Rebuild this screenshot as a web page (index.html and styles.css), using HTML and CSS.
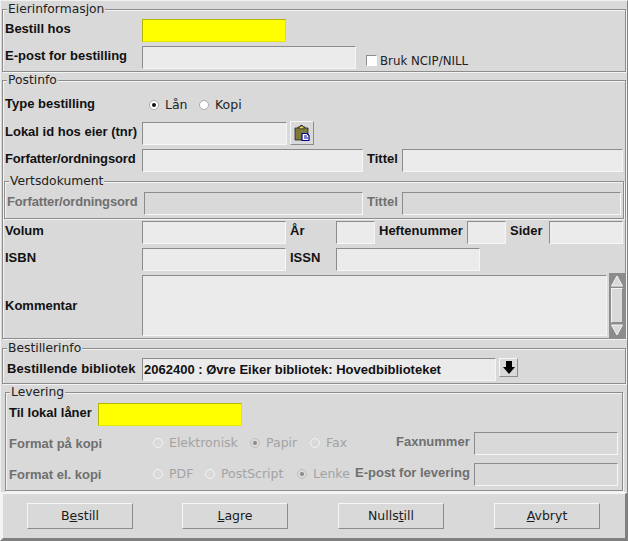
FILE: index.html
```html
<!DOCTYPE html>
<html lang="no">
<head>
<meta charset="utf-8">
<title>Bestilling</title>
<link rel="stylesheet" href="styles.css">
</head>
<body>
<div class="window">
  <form class="form">
    <fieldset class="group owner">
      <legend>Eierinformasjon</legend>
      <div class="row r1"><label class="lab l137">Bestill hos</label><input class="field req w144"></div>
      <div class="row r2"><label class="lab l137">E-post for bestilling</label><input class="field w214"><label class="check"><span class="box"></span>Bruk NCIP/NILL</label></div>
    </fieldset>
    <fieldset class="group post">
      <legend>Postinfo</legend>
      <div class="row r3"><label class="lab l137">Type bestilling</label>
        <span class="radios"><span class="radio on first"></span><span class="rtext t1">Lån</span><span class="radio"></span><span class="rtext">Kopi</span></span></div>
      <div class="row r4"><label class="lab l137">Lokal id hos eier (tnr)</label><input class="field w145 end"><button type="button" class="iconbtn paste" aria-label="Lim inn">
        <svg width="16" height="16" viewBox="0 0 16 16"><path d="M1 3h3V2h1.500l1-1.500h2l1 1.500H11v1h3v8.500H10V15H1z" fill="#7d7a3c" stroke="#222" stroke-width=".8"/><path d="M5 2.800l1.800-1.800h1.500l1.800 1.800v1H5z" fill="#e6d96a" stroke="#222" stroke-width=".7"/><path d="M8 8.500h5l2 2v5H8z" fill="#fff" stroke="#008" stroke-width="1.200"/><path d="M10 11h3M10 13h4" stroke="#008"/></svg></button></div>
      <div class="row r5"><label class="lab l137 tight">Forfatter/ordningsord</label><input class="field w221"><label class="lab tittel">Tittel</label><input class="field w221"></div>
      <fieldset class="group host">
        <legend>Vertsdokument</legend>
        <div class="row r6"><label class="lab dim l137 tight">Forfatter/ordningsord</label><input class="field off w219"><label class="lab dim tittel">Tittel</label><input class="field off w219"></div>
      </fieldset>
      <div class="row r7a"><label class="lab l137">Volum</label><input class="field w144"><label class="lab aar">År</label><input class="field w39"><label class="lab hefte">Heftenummer</label><input class="field w39"><label class="lab sider">Sider</label><input class="field w74"></div>
      <div class="row r7"><label class="lab l137">ISBN</label><input class="field w144"><label class="lab aar">ISSN</label><input class="field w144"></div>
      <div class="row r8"><label class="lab l137 mid">Kommentar</label><textarea class="field area"></textarea>
        <div class="scroll">
          <svg class="sarrow" width="12" height="12" viewBox="0 0 12 12"><path d="M6 1L11.500 11H.5z" fill="#d9d9d9" stroke="#f4f4f4"/></svg>
          <div class="thumb"></div>
          <svg class="sarrow" width="12" height="12" viewBox="0 0 12 12"><path d="M6 11L11.500 1H.5z" fill="#d9d9d9" stroke="#f4f4f4"/></svg>
        </div>
      </div>
    </fieldset>
    <fieldset class="group orderer">
      <legend>Bestillerinfo</legend>
      <div class="row r9"><label class="lab libl">Bestillende bibliotek</label><input class="field value" value="2062400 : Øvre Eiker bibliotek: Hovedbiblioteket"><button type="button" class="iconbtn drop" aria-label="Velg">
        <svg width="12" height="13" viewBox="0 0 12 13"><path d="M3 0h6v6h3L6 13 0 6h3z" fill="#000"/></svg></button></div>
    </fieldset>
    <fieldset class="group delivery">
      <legend>Levering</legend>
      <div class="row r10"><label class="lab til">Til lokal låner</label><input class="field req w144"></div>
      <div class="row r11"><label class="lab dim fmt">Format på kopi</label>
        <span class="radios dimr"><span class="radio f1"></span><span class="rtext e1">Elektronisk</span><span class="radio on"></span><span class="rtext e2">Papir</span><span class="radio"></span><span class="rtext e3">Fax</span></span>
        <label class="lab dim fax">Faxnummer</label><input class="field off w144"></div>
      <div class="row r12"><label class="lab dim fmt">Format el. kopi</label>
        <span class="radios dimr"><span class="radio f1"></span><span class="rtext p1">PDF</span><span class="radio"></span><span class="rtext p2">PostScript</span><span class="radio on"></span><span class="rtext p3">Lenke</span></span>
        <label class="lab dim epost">E-post for levering</label><input class="field off w144"></div>
    </fieldset>
  </form>
  <div class="actions">
    <button type="button" class="btn">B<u>e</u>still</button>
    <button type="button" class="btn second"><u>L</u>agre</button>
    <button type="button" class="btn">Nulls<u>t</u>ill</button>
    <button type="button" class="btn"><u>A</u>vbryt</button>
  </div>
</div>
</body>
</html>
```
FILE: styles.css
```css
* { box-sizing: border-box; }
html, body { margin: 0; padding: 0; }
body { width: 628px; height: 541px; background: #d9d9d9; overflow: hidden; font-family: "DejaVu Sans", sans-serif; font-size: 12px; color: #1c1c1c; }
.window { width: 628px; height: 541px; display: flex; flex-direction: column; }
.form { flex: none; height: 492px; display: flex; flex-direction: column; padding: 1px 1px 0 1px; border-top: 1px solid #f0f0f0; border-left: 1px solid #f0f0f0; border-right: 1px solid #808080; }

.group { margin: 0; padding: 0; min-width: 0; border: 1px solid #8c8c8c; box-shadow: inset 1px 1px 0 #f4f4f4, 1px 1px 0 #f4f4f4; display: flex; flex-direction: column; }
legend { margin-left: 2px; padding: 1px 1px 0; height: 14px; line-height: 13px; font-size: 12.3px; color: #222; background: #d9d9d9; position: relative; }

.owner { height: 70px; padding: 3px 0 0 2px; }
.post { height: 266px; margin-top: 1px; padding: 0 0 0 2px; }
.host { height: 45px; margin: 2px 0 0 -1px; width: 620px; padding: 4px 0 0 2px; }
.orderer { height: 43px; margin-top: 2px; padding: 3px 0 0 4px; }
.orderer legend { margin-left: 0; }
.delivery { height: 106px; width: 618px; margin: 1px 0 0 3px; padding: 4px 4px 0 3px; }
.delivery legend { margin-left: 1px; }

.row { display: flex; align-items: center; flex: none; }
.r1 { height: 23px; }
.r2 { height: 23px; margin-top: 4px; }
.r3 { height: 23px; margin-top: 7px; }
.r4 { height: 24px; margin-top: 4px; }
.r5 { height: 23px; margin-top: 4px; }
.r6 { height: 23px; }
.r7a { height: 23px; margin-top: 2px; }
.r7 { height: 23px; margin-top: 4px; }
.r8 { height: 65px; margin-top: 2px; }
.r9 { height: 23px; }
.r10 { height: 23px; }
.r11 { height: 23px; margin-top: 6px; }
.r12 { height: 23px; margin-top: 8px; }

.lab { font-family: "Liberation Sans", Arial, sans-serif; font-weight: bold; font-size: 13px; color: #111; white-space: nowrap; padding-bottom: 4px; }
.dim { color: #6f6f6f; }
.tight { letter-spacing: -.15px; }
.mid { padding-bottom: 0; }
.l137 { width: 137px; flex: none; }
.tittel { width: 35px; margin-left: 4px; flex: none; }
.aar { width: 46px; margin-left: 4px; flex: none; }
.hefte { width: 88px; margin-left: 4px; flex: none; }
.sider { width: 39px; margin-left: 4px; flex: none; }
.libl { width: 135px; flex: none; padding-bottom: 2px; letter-spacing: .1px; }
.til { width: 89px; flex: none; padding-bottom: 4px; }
.fmt { width: 141px; flex: none; padding-bottom: 0; }
.fax { margin-left: auto; width: 78px; flex: none; }
.epost { margin-left: auto; width: 119px; flex: none; }

.field { display: block; flex: none; height: 23px; margin: 0; padding: 0; background: #ebebeb; border: 1px solid; border-color: #8c8c8c #f6f6f6 #f6f6f6 #8c8c8c; border-radius: 0; outline: 0; resize: none; }
.field.off { background: #d9d9d9; }
.field.req { background: #ffff00; border-color: #b3b300 #e6e600 #e6e600 #b3b300; }
.end { align-self: flex-end; }
.w144 { width: 144px; }
.w145 { width: 145px; }
.w214 { width: 214px; }
.w221 { width: 221px; }
.w219 { width: 219px; }
.w39 { width: 39px; }
.w74 { width: 74px; }
.area { width: 465px; height: 61px; align-self: flex-start; margin-top: 2px; }
.value { width: 354px; padding: 0 1px 1px 1px; font: bold 13px "Liberation Sans", Arial, sans-serif; color: #111; }

.check { display: flex; align-items: center; margin-left: 10px; margin-top: 6px; font-size: 11.8px; color: #222; white-space: nowrap; }
.box { width: 11px; height: 11px; margin-right: 3px; background: #fff; border: 1px solid; border-color: #8c8c8c #fff #fff #8c8c8c; }

.radios { display: flex; align-items: center; font-size: 12.5px; color: #222; padding-bottom: 2px; }
.radios.dimr { color: #a3a3a3; }
.radio { flex: none; width: 10px; height: 10px; border-radius: 50%; background: #fff; border: 1px solid #aaa; position: relative; }
.radio.on::after { content: ""; position: absolute; left: 2px; top: 2px; width: 4px; height: 4px; border-radius: 50%; background: #111; }
.dimr .radio { background: #d9d9d9; border-color: #f4f4f4; }
.dimr .radio.on { border-color: #c0c0c0; }
.dimr .radio.on::after { background: #8a8a8a; }
.first { margin-left: 7px; }
.rtext { margin-left: 6px; }
.t1 { width: 34px; }
.f1 { margin-left: 3px; }
.e1 { width: 81px; }
.e2 { width: 44px; }
.e3 { width: 26px; }
.p1 { width: 36px; }
.p2 { width: 76px; }
.p3 { width: 39px; }

.iconbtn { flex: none; padding: 0; display: flex; align-items: center; justify-content: center; background: #d9d9d9; border: 1px solid; border-color: #f6f6f6 #8c8c8c #8c8c8c #f6f6f6; }
.paste { width: 24px; height: 24px; margin-left: 3px; }
.drop { width: 19px; height: 19px; margin-left: 3px; align-self: flex-start; }

.scroll { width: 16px; height: 65px; margin-left: 2px; flex: none; display: flex; flex-direction: column; align-items: center; justify-content: space-between; background: #8c8c8c; padding: 2px 0; }
.sarrow { flex: none; }
.thumb { flex: 1; width: 12px; margin: 1px 0; background: #d9d9d9; border: 1px solid; border-color: #f4f4f4 #8c8c8c #8c8c8c #f4f4f4; }

.actions { flex: 1; display: flex; align-items: flex-start; gap: 50px; background: #d9d9d9; border-style: solid; border-width: 2px 3px 3px 3px; border-color: #f4f4f4 #808080 #808080 #f4f4f4; padding: 9px 0 0 24px; }
.btn { flex: none; width: 106px; height: 26px; padding: 0 0 2px; background: #d9d9d9; border: 1px solid; border-color: #f6f6f6 #8c8c8c #8c8c8c #f6f6f6; font: 12.5px "DejaVu Sans", sans-serif; color: #1c1c1c; }
.second { margin-left: -1px; }
```
